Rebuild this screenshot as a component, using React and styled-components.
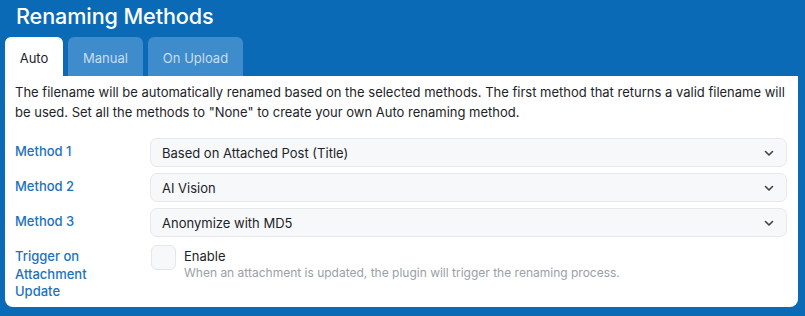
import React, { useState } from "react";
import styled, { createGlobalStyle } from "styled-components";

const GlobalStyle = createGlobalStyle`
  html, body {
    margin: 0;
    padding: 0;
    background: #0a6ab6;
  }
  body {
    font-family: Inter, "Noto Sans", "Liberation Sans", sans-serif;
    -webkit-font-smoothing: antialiased;
  }
`;

const methods = [
  { label: "Method 1", value: "Based on Attached Post (Title)" },
  { label: "Method 2", value: "AI Vision" },
  { label: "Method 3", value: "Anonymize with MD5" },
];

const tabs = ["Auto", "Manual", "On Upload"];

const Chevron = () => (
  <svg width="12" height="12" viewBox="0 0 12 12" fill="none">
    <path
      d="M2.5 4.5L6 8L9.5 4.5"
      stroke="#3c434a"
      strokeWidth="1.6"
      strokeLinecap="round"
      strokeLinejoin="round"
    />
  </svg>
);

export default function App() {
  const [active, setActive] = useState("Auto");
  const [enabled, setEnabled] = useState(false);

  return (
    <>
      <GlobalStyle />
      <Wrapper>
        <Title>Renaming Methods</Title>
        <Tabs>
          {tabs.map((t) => (
            <Tab key={t} active={t === active} onClick={() => setActive(t)}>
              {t}
            </Tab>
          ))}
        </Tabs>
        <Panel>
          <Description>
            The filename will be automatically renamed based on the selected
            methods. The first method that returns a valid filename will be
            used. Set all the methods to "None" to create your own Auto
            renaming method.
          </Description>
          <Form>
            {methods.map((m) => (
              <Row key={m.label}>
                <Label>{m.label}</Label>
                <Select>
                  <span>{m.value}</span>
                  <Chevron />
                </Select>
              </Row>
            ))}
            <Row top>
              <Label multiline>Trigger on Attachment Update</Label>
              <CheckRow>
                <Checkbox
                  checked={enabled}
                  onClick={() => setEnabled(!enabled)}
                />
                <CheckText>
                  <CheckLabel>Enable</CheckLabel>
                  <Hint>
                    When an attachment is updated, the plugin will trigger the
                    renaming process.
                  </Hint>
                </CheckText>
              </CheckRow>
            </Row>
          </Form>
        </Panel>
      </Wrapper>
    </>
  );
}

const Wrapper = styled.div`
  width: 805px;
  height: 316px;
  box-sizing: border-box;
  padding: 0 7px 9px 5px;
  display: flex;
  flex-direction: column;
`;

const Title = styled.h1`
  margin: 0;
  padding: 3px 0 0 11px;
  height: 37px;
  box-sizing: border-box;
  font-size: 21.6px;
  font-weight: 500;
  color: #fff;
  letter-spacing: -0.1px;
`;

const Tabs = styled.div`
  display: flex;
  gap: 5px;
`;

const Tab = styled.button`
  height: 39px;
  padding: 2px ${(p) => (p.active ? "14px" : "15px")} 0;
  border: none;
  border-radius: 6px 6px 0 0;
  font-family: inherit;
  font-size: 13px;
  cursor: pointer;
  background: ${(p) => (p.active ? "#fff" : "#3f8ccd")};
  color: ${(p) => (p.active ? "#1d2327" : "#c9def1")};
  min-width: ${(p) => (p.active ? "58px" : "auto")};
`;

const Panel = styled.div`
  flex: 1;
  background: #fff;
  border-radius: 0 0 8px 8px;
  padding: 7px 11px 0 10px;
`;

const Description = styled.p`
  margin: 0;
  font-size: 13px;
  line-height: 19.5px;
  color: #1d2327;
`;

const Form = styled.div`
  margin-top: 16px;
  display: flex;
  flex-direction: column;
  gap: 6px;
`;

const Row = styled.div`
  display: flex;
  align-items: ${(p) => (p.top ? "flex-start" : "center")};
  margin-top: ${(p) => (p.top ? "2px" : "0")};
`;

const Label = styled.div`
  width: 135px;
  flex-shrink: 0;
  font-size: 13px;
  font-weight: 500;
  color: #1a72c0;
  line-height: ${(p) => (p.multiline ? "17.5px" : "normal")};
  padding-top: ${(p) => (p.multiline ? "3px" : "0")};
  padding-right: ${(p) => (p.multiline ? "50px" : "0")};
  box-sizing: border-box;
  margin-top: ${(p) => (p.multiline ? "0" : "-3px")};
`;

const Select = styled.div`
  flex: 1;
  height: 29px;
  box-sizing: border-box;
  border: 1px solid #e6e8ec;
  border-radius: 7px;
  background: #f7f8fa;
  display: flex;
  align-items: center;
  justify-content: space-between;
  padding: 0 11px 0 11px;
  font-size: 13px;
  color: #1d2327;
`;

const CheckRow = styled.div`
  display: flex;
  gap: 8px;
  align-items: flex-start;
`;

const Checkbox = styled.div`
  width: 25px;
  height: 25px;
  box-sizing: border-box;
  border: 1px solid #e3e6ea;
  border-radius: 6px;
  background: #f7f8fa;
  cursor: pointer;
  margin-left: 1px;
`;

const CheckText = styled.div`
  display: flex;
  flex-direction: column;
  padding-top: 3px;
`;

const CheckLabel = styled.span`
  font-size: 13px;
  color: #1d2327;
  line-height: 17px;
`;

const Hint = styled.span`
  font-size: 12px;
  color: #9aa0a6;
  line-height: 16px;
`;
